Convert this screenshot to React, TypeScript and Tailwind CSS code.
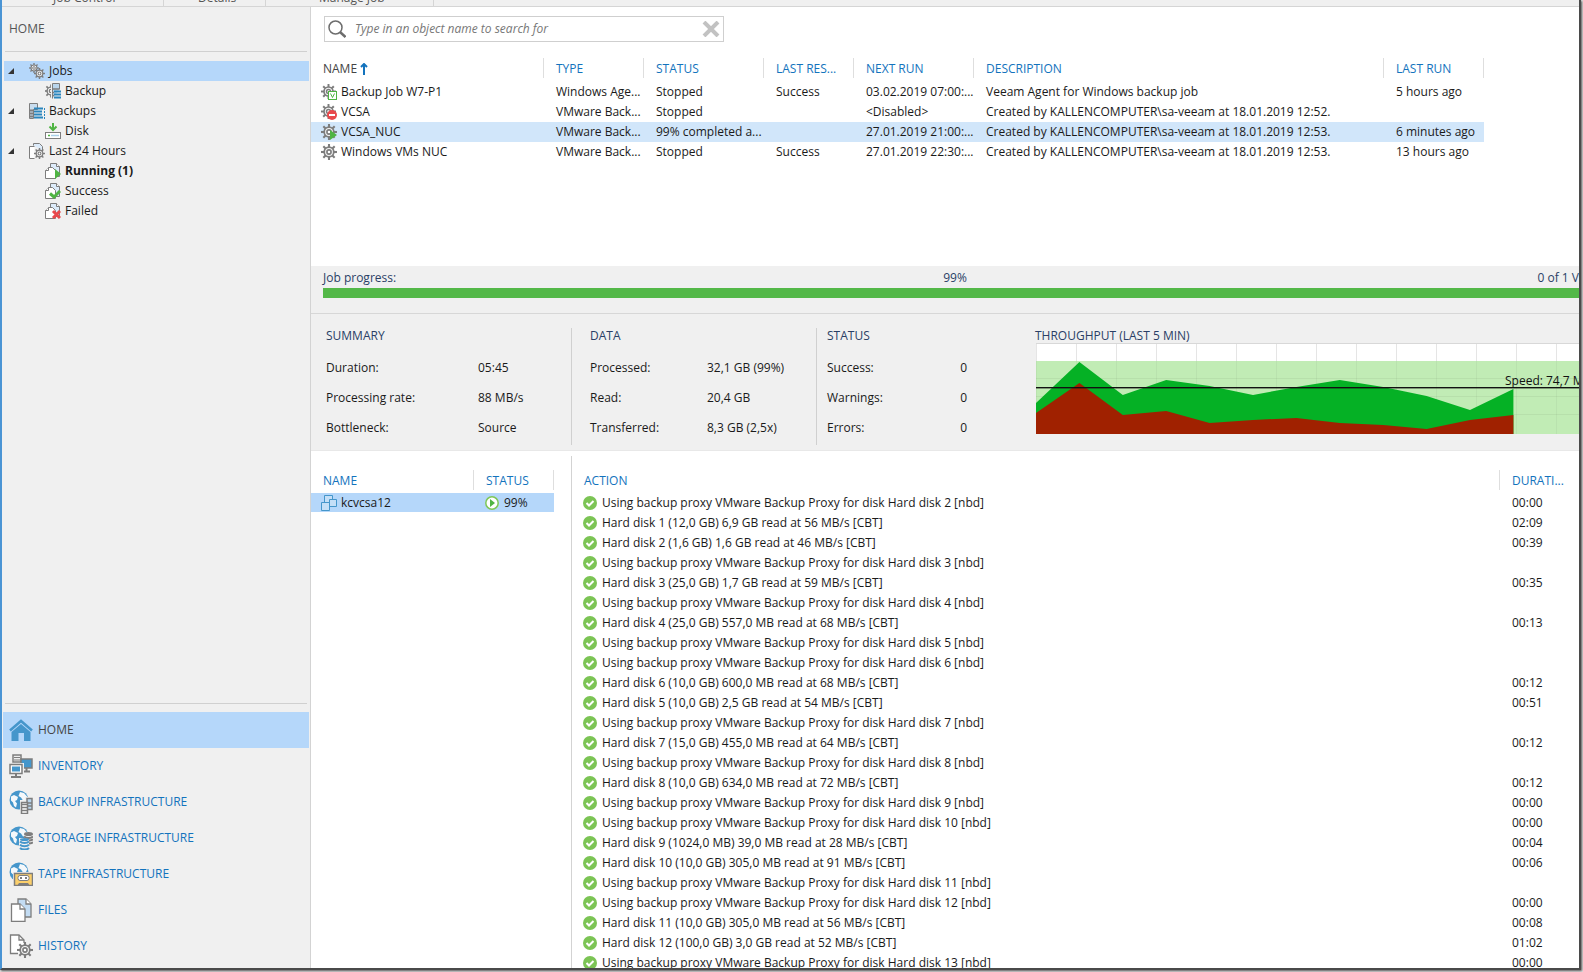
import type { ReactNode } from 'react'

const GREY = '#7d7d7d'
const BLUE = '#4596cb'
const GREEN = '#4fb443'
const RED = '#e9494c'

interface GearProps {
  cx: number
  cy: number
  r: number
  fill?: string
}

function Gear({ cx, cy, r, fill = '#f4f4f4' }: GearProps) {
  return (
    <g stroke={GREY} fill="none">
      {[0, 45, 90, 135].map((angle) => (
        <path
          key={angle}
          d={`M${cx - r} ${cy}h${r * 2}`}
          strokeWidth={r * 0.26}
          transform={`rotate(${angle} ${cx} ${cy})`}
        />
      ))}
      <circle cx={cx} cy={cy} r={r * 0.6} strokeWidth={r * 0.22} fill={fill} />
      <circle cx={cx} cy={cy} r={r * 0.26} strokeWidth={r * 0.2} fill="#fff" />
    </g>
  )
}

function Svg({ size, children }: { size: number; children: ReactNode }) {
  return (
    <svg width={size} height={size} viewBox={`0 0 ${size} ${size}`} className="shrink-0" aria-hidden="true">
      {children}
    </svg>
  )
}

function Pages() {
  return (
    <g fill="#fff" stroke={GREY}>
      <path d="M5.5 5.500v-5h6l3 3v10h-4" fill="#dcebfa" />
      <path d="M11.500 .5v3h3" />
      <path d="M3.500 4.500h4l3 3v8h-10v-8z" />
      <path d="M3.500 4.500v3h-3" />
    </g>
  )
}

function Globe() {
  return (
    <g>
      <circle cx="10" cy="10" r="9.500" fill={BLUE} />
      <path
        d="M2 6.500l3-1.500 4 2-1 3-2 1 2 2.500-1 4-2-1.500-1-3.500-2-2zM11 2l4 1 3.500 4-1.500 3-3 .5-2-3-2.500-1.500z"
        fill="#f4f8fb"
      />
    </g>
  )
}

const smallIcons = {
  jobs: (
    <Svg size={16}>
      <Gear cx={5} cy={5} r={5} />
      <Gear cx={10.5} cy={10.5} r={5.5} />
    </Svg>
  ),
  backup: (
    <Svg size={16}>
      <Gear cx={6} cy={8} r={6.5} />
      <rect x="6" y="0" width="10" height="16" fill="#f0f0f0" />
      <path d="M7.500 15.500V.5h7v6" fill="#b9d5ec" stroke={GREY} />
      <path d="M8 6h6M8 9.500h1M8 12.500h1" stroke={GREY} strokeWidth="1.500" />
      <path d="M9 8.500h7M9 11.500h7M9 14.500h7" stroke="#2b86bd" strokeWidth="2" />
    </Svg>
  ),
  backups: (
    <Svg size={16}>
      <path d="M.5 15.500V.5h8v6h-4v9z" fill="#c9ddee" stroke={GREY} />
      <path d="M1 7.500h4M1 10.500h4M1 13.500h4" stroke={GREY} strokeWidth="2" />
      <path d="M5 5.500h9M5 8.500h8M5 11.500h8M5 14.500h9" stroke="#2b86bd" strokeWidth="2" />
      <path d="M15.500 5v11" stroke="#2b86bd" strokeDasharray="2 1" />
    </Svg>
  ),
  disk: (
    <Svg size={16}>
      <path d="M8 0v7M4.500 3.500L8 7l3.500-3.500" stroke={GREEN} strokeWidth="2" fill="none" />
      <rect x=".5" y="9.500" width="15" height="6" fill="#fff" stroke={GREY} />
      <path d="M3 12.500h2" stroke={GREEN} strokeWidth="1.500" />
      <path d="M6 12.500h8" stroke="#a9cfe9" strokeWidth="1.500" />
    </Svg>
  ),
  history: (
    <Svg size={16}>
      <path d="M4.500 2.500v-2h6l3 3v4" fill="#dcebfa" stroke={GREY} />
      <path d="M5.500 15.500h-5v-12h5" fill="#fff" stroke={GREY} />
      <Gear cx={10.5} cy={10.5} r={5.5} />
    </Svg>
  ),
  running: (
    <Svg size={16}>
      <Pages />
      <path d="M10 6l6 5-6 5z" fill={GREEN} />
    </Svg>
  ),
  success: (
    <Svg size={16}>
      <Pages />
      <path d="M5 10.500l4 3.500 6-6" stroke={GREEN} strokeWidth="3" fill="none" />
    </Svg>
  ),
  failed: (
    <Svg size={16}>
      <Pages />
      <path d="M8 8l7 7M15 8l-7 7" stroke={RED} strokeWidth="3" />
    </Svg>
  ),
  agentJob: (
    <Svg size={16}>
      <Gear cx={7.5} cy={7.5} r={7.5} />
      <rect x="7.500" y="7.500" width="8" height="8" fill="#fff" stroke={GREEN} />
      <path d="M9.500 9.500l2 4 2-4" fill="none" stroke={GREEN} />
    </Svg>
  ),
  disabledJob: (
    <Svg size={16}>
      <Gear cx={7.5} cy={7.5} r={7.5} />
      <circle cx="11" cy="11" r="5" fill={RED} />
      <path d="M8 11h6" stroke="#fff" strokeWidth="2" />
    </Svg>
  ),
  runningJob: (
    <Svg size={16}>
      <Gear cx={8} cy={8} r={8} />
      <path d="M9 6l7 5-7 5z" fill={GREEN} />
    </Svg>
  ),
  job: (
    <Svg size={16}>
      <Gear cx={8} cy={8} r={8} />
    </Svg>
  ),
}

const navIcons = {
  home: (
    <Svg size={24}>
      <path d="M1 12.500L12 3l11 9.500" stroke={BLUE} strokeWidth="2.500" fill="none" />
      <path d="M2.500 14L12 6l9.500 8v9H15v-8H9.500v8h-7z" fill={BLUE} />
    </Svg>
  ),
  inventory: (
    <Svg size={24}>
      <path d="M4 1h8v7H4z" fill="#eee" stroke={GREY} strokeWidth="1.500" />
      <path d="M5 3.500h6M5 6h6" stroke={GREY} />
      <path d="M12 5h11v9H12z" fill={BLUE} stroke={GREY} strokeWidth="1.500" />
      <path d="M17.500 14v3M15 17.500h6" stroke={GREY} strokeWidth="2" />
      <path d="M0 9h15v14H0z" fill="#f0f0f0" />
      <path d="M1 10.500h12v9H1z" fill="#fff" stroke={GREY} strokeWidth="1.500" />
      <path d="M3 12.500h8v5H3z" fill={BLUE} />
      <path d="M7 20v3M2 23h10" stroke={GREY} strokeWidth="2" />
    </Svg>
  ),
  backup: (
    <Svg size={24}>
      <Globe />
      <path d="M11 10h5V7h8v17H11z" fill="#f0f0f0" />
      <path d="M18 8.500h5v11h-5z" fill="#b9d5ec" stroke={GREY} strokeWidth="1.500" />
      <path d="M18 13h5M18 16h5" stroke={GREY} strokeWidth="1.500" />
      <path d="M12.500 12.500h6v11h-6z" fill="#fff" stroke={GREY} strokeWidth="1.500" />
      <path d="M13 14.500h5M13 17.500h5M13 20.500h5" stroke={GREY} strokeWidth="1.500" />
    </Svg>
  ),
  storage: (
    <Svg size={24}>
      <Globe />
      <path d="M10 12h5V6h9v18H10z" fill="#f0f0f0" />
      <ellipse cx="19.500" cy="8" rx="4.500" ry="2" fill={GREY} />
      <path d="M15 10.500c2 2 7 2 9 0M20 14.500c2 0 3-.5 4-1M20 17.500c2 0 3-.5 4-1" stroke={GREY} strokeWidth="2" fill="none" />
      <ellipse cx="15.500" cy="13.500" rx="4.500" ry="1.500" fill={BLUE} />
      <path
        d="M11 15.500c2 2 7 2 9 0M11 18.800c2 2 7 2 9 0M11 22c2 2 7 2 9 0"
        stroke={BLUE}
        strokeWidth="2"
        fill="none"
      />
    </Svg>
  ),
  tape: (
    <Svg size={24}>
      <Globe />
      <path d="M4 10h20v14H4z" fill="#f0f0f0" />
      <path d="M5.500 11.500h18v12h-18z" fill="#fbcf6b" stroke={GREY} strokeWidth="1.500" />
      <rect x="9" y="13.500" width="11" height="5" rx="2" fill="#fff" stroke={GREY} />
      <path d="M11 16h2M16 16h2" stroke={GREY} strokeWidth="2" />
      <path d="M8 24l2-3h9l2 3z" fill={GREY} />
    </Svg>
  ),
  files: (
    <Svg size={24}>
      <g fill="#fff" stroke={GREY} strokeWidth="1.300">
        <path d="M9 6V1h8l5 5v13h-6" fill="#c3dcf3" />
        <path d="M17 1v5h5" />
        <path d="M2.500 6H11l5 5v12.500H2.500z" />
        <path d="M11 6v5h5" />
      </g>
    </Svg>
  ),
  history: (
    <Svg size={24}>
      <path d="M9 19.500H1.500V1H10l5 5v3" fill="#fff" stroke={GREY} strokeWidth="1.300" />
      <path d="M10 1v5h5" fill="none" stroke={GREY} strokeWidth="1.300" />
      <Gear cx={16} cy={16} r={8} />
    </Svg>
  ),
}

type SmallIcon = keyof typeof smallIcons
type NavIcon = keyof typeof navIcons

const tree: { label: string; icon: SmallIcon; child?: boolean; active?: boolean; bold?: boolean }[] = [
  { label: 'Jobs', icon: 'jobs', active: true },
  { label: 'Backup', icon: 'backup', child: true },
  { label: 'Backups', icon: 'backups' },
  { label: 'Disk', icon: 'disk', child: true },
  { label: 'Last 24 Hours', icon: 'history' },
  { label: 'Running (1)', icon: 'running', child: true, bold: true },
  { label: 'Success', icon: 'success', child: true },
  { label: 'Failed', icon: 'failed', child: true },
]

const views: { label: string; icon: NavIcon; active?: boolean }[] = [
  { label: 'HOME', icon: 'home', active: true },
  { label: 'INVENTORY', icon: 'inventory' },
  { label: 'BACKUP INFRASTRUCTURE', icon: 'backup' },
  { label: 'STORAGE INFRASTRUCTURE', icon: 'storage' },
  { label: 'TAPE INFRASTRUCTURE', icon: 'tape' },
  { label: 'FILES', icon: 'files' },
  { label: 'HISTORY', icon: 'history' },
]

const jobs: { icon: SmallIcon; cells: string[]; active?: boolean }[] = [
  {
    icon: 'agentJob',
    cells: ['Backup Job W7-P1', 'Windows Age...', 'Stopped', 'Success', '03.02.2019 07:00:...', 'Veeam Agent for Windows backup job', '5 hours ago'],
  },
  {
    icon: 'disabledJob',
    cells: ['VCSA', 'VMware Back...', 'Stopped', '', '<Disabled>', 'Created by KALLENCOMPUTER\\sa-veeam at 18.01.2019 12:52.', ''],
  },
  {
    icon: 'runningJob',
    active: true,
    cells: ['VCSA_NUC', 'VMware Back...', '99% completed a...', '', '27.01.2019 21:00:...', 'Created by KALLENCOMPUTER\\sa-veeam at 18.01.2019 12:53.', '6 minutes ago'],
  },
  {
    icon: 'job',
    cells: ['Windows VMs NUC', 'VMware Back...', 'Stopped', 'Success', '27.01.2019 22:30:...', 'Created by KALLENCOMPUTER\\sa-veeam at 18.01.2019 12:53.', '13 hours ago'],
  },
]

const jobColumns = ['TYPE', 'STATUS', 'LAST RES...', 'NEXT RUN', 'DESCRIPTION', 'LAST RUN']

const proxy = (disk: number) => `Using backup proxy VMware Backup Proxy for disk Hard disk ${disk} [nbd]`

const actions: [string, string][] = [
  [proxy(2), '00:00'],
  ['Hard disk 1 (12,0 GB) 6,9 GB read at 56 MB/s [CBT]', '02:09'],
  ['Hard disk 2 (1,6 GB) 1,6 GB read at 46 MB/s [CBT]', '00:39'],
  [proxy(3), ''],
  ['Hard disk 3 (25,0 GB) 1,7 GB read at 59 MB/s [CBT]', '00:35'],
  [proxy(4), ''],
  ['Hard disk 4 (25,0 GB) 557,0 MB read at 68 MB/s [CBT]', '00:13'],
  [proxy(5), ''],
  [proxy(6), ''],
  ['Hard disk 6 (10,0 GB) 600,0 MB read at 68 MB/s [CBT]', '00:12'],
  ['Hard disk 5 (10,0 GB) 2,5 GB read at 54 MB/s [CBT]', '00:51'],
  [proxy(7), ''],
  ['Hard disk 7 (15,0 GB) 455,0 MB read at 64 MB/s [CBT]', '00:12'],
  [proxy(8), ''],
  ['Hard disk 8 (10,0 GB) 634,0 MB read at 72 MB/s [CBT]', '00:12'],
  [proxy(9), '00:00'],
  [proxy(10), '00:00'],
  ['Hard disk 9 (1024,0 MB) 39,0 MB read at 28 MB/s [CBT]', '00:04'],
  ['Hard disk 10 (10,0 GB) 305,0 MB read at 91 MB/s [CBT]', '00:06'],
  [proxy(11), ''],
  [proxy(12), '00:00'],
  ['Hard disk 11 (10,0 GB) 305,0 MB read at 56 MB/s [CBT]', '00:08'],
  ['Hard disk 12 (100,0 GB) 3,0 GB read at 52 MB/s [CBT]', '01:02'],
  [proxy(13), '00:00'],
]

function Ribbon() {
  return (
    <div className="flex h-[7px] shrink-0 items-end overflow-hidden border-b border-[#d5d5d5] bg-[#f0f0f0] leading-4 text-[#555]">
      <div className="w-[162px] border-r border-[#d5d5d5] pl-[51px]">Job Control</div>
      <div className="w-[102px] border-r border-[#d5d5d5] pl-[34px]">Details</div>
      <div className="w-[168px] border-r border-[#d5d5d5] pl-[53px]">Manage Job</div>
    </div>
  )
}

function Sidebar() {
  return (
    <aside className="flex w-[309px] shrink-0 flex-col border-r border-[#d3d3d3] bg-[#f0f0f0]">
      <h1 className="mx-[3px] h-[45px] shrink-0 border-b border-[#d0d0d0] pl-1 leading-[43px] text-[#555]">HOME</h1>
      <ul className="ml-[2px] mr-px mt-[9px]">
        {tree.map((item) => (
          <li key={item.label}>
            <button
              type="button"
              className={`flex h-5 w-full items-center gap-1 pl-1 text-left ${item.active ? 'bg-[#b5d7fa]' : ''} ${item.bold ? 'font-bold' : ''}`}
            >
              <span className={item.child ? 'w-[33px]' : 'w-[17px]'}>
                {!item.child && (
                  <svg width="6" height="6" className="block" aria-hidden="true">
                    <path d="M6 0v6H0z" fill="#333" />
                  </svg>
                )}
              </span>
              {smallIcons[item.icon]}
              {item.label}
            </button>
          </li>
        ))}
      </ul>
      <nav className="mt-auto pb-1">
        <hr className="mx-[3px] mb-2 border-[#d0d0d0]" />
        {views.map((view) => (
          <a
            key={view.label}
            href="#"
            className={`mx-px flex h-9 items-center gap-[5px] pl-[6px] ${view.active ? 'bg-[#b5d7fa] text-[#444]' : 'text-[#1373bd]'}`}
          >
            {navIcons[view.icon]}
            {view.label}
          </a>
        ))}
      </nav>
    </aside>
  )
}

function SearchBox() {
  return (
    <div className="ml-[13px] mt-[9px] flex h-[26px] w-[400px] items-center border border-[#cfcfcf] px-[3px]">
      <svg width="18" height="18" viewBox="0 0 18 18" fill="none" stroke="#6d6d6d" className="shrink-0" aria-hidden="true">
        <circle cx="7.500" cy="7.500" r="6.500" strokeWidth="1.500" />
        <path d="M12 12l5.500 5" strokeWidth="2.500" />
      </svg>
      <input
        type="text"
        aria-label="Search objects"
        placeholder="Type in an object name to search for"
        className="min-w-0 flex-1 px-[9px] italic outline-none placeholder:text-[#777]"
      />
      <button type="button" aria-label="Clear search">
        <svg width="18" height="16" viewBox="0 0 18 16" className="block" aria-hidden="true">
          <path d="M2 1l14 14M16 1L2 15" stroke="#c2c2c2" strokeWidth="4" />
        </svg>
      </button>
    </div>
  )
}

function JobTable() {
  return (
    <table className="mt-4 w-[1173px] table-fixed border-collapse whitespace-nowrap text-left">
      <colgroup>
        <col className="w-[233px]" />
        <col className="w-[100px]" />
        <col className="w-[120px]" />
        <col className="w-[90px]" />
        <col className="w-[120px]" />
        <col className="w-[410px]" />
        <col className="w-[100px]" />
      </colgroup>
      <thead>
        <tr className="h-6 align-top leading-[22px]">
          <th className="p-0 font-normal">
            <div className="flex h-5 items-end gap-[3px] border-r border-[#dedede] pl-3 text-[#444]">
              <span className="h-5">NAME</span>
              <svg width="8" height="12" viewBox="0 0 8 12" className="mb-[3px]" aria-hidden="true">
                <path d="M4 12V1M1 4l3-3 3 3" stroke="#1373bd" strokeWidth="2" fill="none" />
              </svg>
            </div>
          </th>
          {jobColumns.map((column) => (
            <th key={column} className="p-0 font-normal">
              <div className="h-5 border-r border-[#dedede] pl-3 text-[#1373bd]">{column}</div>
            </th>
          ))}
        </tr>
      </thead>
      <tbody>
        {jobs.map(({ icon, cells, active }) => (
          <tr key={cells[0]} className={`h-5 ${active ? 'bg-[#d1e6fa]' : ''}`}>
            <td className="p-0 pl-[10px]">
              <div className="flex items-center gap-1">
                {smallIcons[icon]}
                {cells[0]}
              </div>
            </td>
            {cells.slice(1).map((cell, i) => (
              <td key={i} className="p-0 pl-3">
                {cell}
              </td>
            ))}
          </tr>
        ))}
      </tbody>
    </table>
  )
}

function Progress() {
  return (
    <section className="h-[48px] shrink-0 border-b border-[#d7d7d7] bg-[#f0f0f0] pl-3 text-[#2a3f66]">
      <div className="flex h-[22px] items-end pb-[2px]">
        <span className="flex-1">Job progress:</span>
        <span className="pl-2">99%</span>
        <span className="flex-1 text-right">0 of 1 V</span>
      </div>
      <div role="progressbar" aria-label="Job progress" aria-valuenow={99} className="h-[10px] bg-[#53b848]" />
    </section>
  )
}

interface StatsProps {
  title: string
  rows: [string, string][]
  className: string
  labelClass: string
}

function Stats({ title, rows, className, labelClass }: StatsProps) {
  return (
    <div className={`mt-[14px] h-[117px] shrink-0 ${className}`}>
      <h2 className="mb-[9px] h-4 leading-4 text-[#2a3f66]">{title}</h2>
      <dl>
        {rows.map(([label, value]) => (
          <div key={label} className="flex h-[30px] items-center">
            <dt className={labelClass}>{label}</dt>
            <dd>{value}</dd>
          </div>
        ))}
      </dl>
    </div>
  )
}

// one sample every 43.4px, y measured from the top edge of the plot
const readSpeed = [60, 19, 52, 37, 43, 52, 44, 37, 44, 53, 67, 46]
const transferSpeed = [70, 40, 72, 68, 80, 77, 75, 80, 82, 86, 77, 72]

function area(samples: number[]) {
  const points = samples.map((y, i) => `${i * 43.4},${y}`)
  return `0,91 ${points.join(' ')} ${(samples.length - 1) * 43.4},91`
}

function Throughput() {
  return (
    <div className="min-w-0 flex-1 pl-[68px] pt-[14px]">
      <h2 className="h-[15px] leading-4 text-[#2a3f66]">THROUGHPUT (LAST 5 MIN)</h2>
      <svg width="100%" height="92" className="ml-px block" role="img" aria-label="Throughput">
        <defs>
          <pattern id="grid" width="40" height="100" patternUnits="userSpaceOnUse">
            <path d="M.5 0v100" stroke="#000" strokeOpacity=".1" />
          </pattern>
        </defs>
        <rect width="100%" height="91" fill="#fff" />
        <rect y="18" width="100%" height="73" fill="#c1ecb5" />
        <g fill="#000" fillOpacity=".05">
          <rect y="35" width="100%" height="1" />
          <rect y="53" width="100%" height="1" />
          <rect y="71" width="100%" height="1" />
        </g>
        <rect width="100%" height="18" fill="url(#grid)" />
        <rect y="18" width="100%" height="73" fill="url(#grid)" fillOpacity=".4" />
        <rect width="100%" height="1" fill="#d8d8d8" />
        <polygon points={area(readSpeed)} fill="#05b125" />
        <polygon points={area(transferSpeed)} fill="#a02100" />
        <rect y="44" width="100%" height="1" fill="#111" />
        <rect y="45" width="100%" height="1" fill="#111" fillOpacity=".4" />
        <text x="469" y="42" fill="#111">
          Speed: 74,7 MB
        </text>
      </svg>
    </div>
  )
}

function MachineList() {
  return (
    <div className="w-[260px] shrink-0">
      <table className="mt-[19px] w-[243px] table-fixed border-collapse text-left">
        <colgroup>
          <col className="w-[163px]" />
          <col className="w-[80px]" />
        </colgroup>
        <thead>
          <tr className="h-[23px] align-top leading-[22px] text-[#1373bd]">
            <th className="p-0 font-normal">
              <div className="h-5 border-r border-[#dedede] pl-3">NAME</div>
            </th>
            <th className="p-0 font-normal">
              <div className="h-5 border-r border-[#dedede] pl-3">STATUS</div>
            </th>
          </tr>
        </thead>
        <tbody>
          <tr className="h-[19px] bg-[#b5d7fa]">
            <td className="p-0 pl-[10px]">
              <div className="flex items-center gap-1">
                <Svg size={16}>
                  <g fill="#c4dff7" stroke={BLUE}>
                    <path d="M3.500 .5h8v7h-8z" />
                    <path d="M8.500 4.500h7v7h-7z" />
                    <path d="M.5 7.500h8v8h-8z" />
                  </g>
                </Svg>
                kcvcsa12
              </div>
            </td>
            <td className="p-0 pl-[11px]">
              <div className="flex items-center gap-[5px]">
                <Svg size={14}>
                  <circle cx="7" cy="7" r="6.200" fill="#fff" stroke="#7fc757" strokeWidth="1.500" />
                  <path d="M5 3l5 4-5 4z" fill={GREEN} />
                </Svg>
                99%
              </div>
            </td>
          </tr>
        </tbody>
      </table>
    </div>
  )
}

function ActionLog() {
  return (
    <div className="mt-[5px] min-w-0 flex-1 border-l border-[#d3d3d3]">
      <table className="mt-[14px] w-full table-fixed border-collapse whitespace-nowrap text-left">
        <colgroup>
          <col />
          <col className="w-[79px]" />
        </colgroup>
        <thead>
          <tr className="h-[23px] align-top leading-[22px] text-[#1373bd]">
            <th className="p-0 font-normal">
              <div className="h-5 border-r border-[#dedede] pl-3">ACTION</div>
            </th>
            <th className="p-0 pl-3 font-normal">DURATI...</th>
          </tr>
        </thead>
        <tbody>
          {actions.map(([action, duration]) => (
            <tr key={action} className="h-5">
              <td className="p-0 pl-[11px]">
                <div className="flex items-center gap-[5px]">
                  <Svg size={14}>
                    <circle cx="7" cy="7" r="7" fill="#7cc455" />
                    <path d="M3.500 7l2.500 2.500 4.500-4.500" fill="none" stroke="#fff" strokeWidth="2" />
                  </Svg>
                  {action}
                </div>
              </td>
              <td className="p-0 pl-3">{duration}</td>
            </tr>
          ))}
        </tbody>
      </table>
    </div>
  )
}

export default function App() {
  return (
    <div className="h-screen overflow-hidden bg-[#e4e4e4] pb-[2px] pr-[2px] font-['Open_Sans','Noto_Sans',sans-serif] text-[12px] leading-4 text-[#1a1a1a]">
      <div className="flex h-full flex-col overflow-hidden border-b-2 border-l-2 border-r-2 border-b-[#4a4a4a] border-l-[#4a94d4] border-r-[#4a4a4a] bg-white shadow-[1px_1px_2px_#555]">
        <Ribbon />
        <div className="flex min-h-0 flex-1">
          <Sidebar />
          <main className="flex min-w-0 flex-1 flex-col overflow-hidden">
            <div className="h-[259px] shrink-0">
              <SearchBox />
              <JobTable />
            </div>
            <Progress />
            <section className="flex h-[137px] shrink-0 overflow-hidden border-b border-[#e8e8e8] bg-[#f0f0f0]">
              <Stats
                title="SUMMARY"
                className="w-[261px] border-r border-[#d0d0d0] pl-[15px]"
                labelClass="w-[152px]"
                rows={[
                  ['Duration:', '05:45'],
                  ['Processing rate:', '88 MB/s'],
                  ['Bottleneck:', 'Source'],
                ]}
              />
              <Stats
                title="DATA"
                className="w-[245px] border-r border-[#d0d0d0] pl-[18px]"
                labelClass="w-[117px]"
                rows={[
                  ['Processed:', '32,1 GB (99%)'],
                  ['Read:', '20,4 GB'],
                  ['Transferred:', '8,3 GB (2,5x)'],
                ]}
              />
              <Stats
                title="STATUS"
                className="w-[150px] pl-[10px]"
                labelClass="flex-1"
                rows={[
                  ['Success:', '0'],
                  ['Warnings:', '0'],
                  ['Errors:', '0'],
                ]}
              />
              <Throughput />
            </section>
            <section className="flex min-h-0 flex-1 overflow-hidden">
              <MachineList />
              <ActionLog />
            </section>
          </main>
        </div>
      </div>
    </div>
  )
}
